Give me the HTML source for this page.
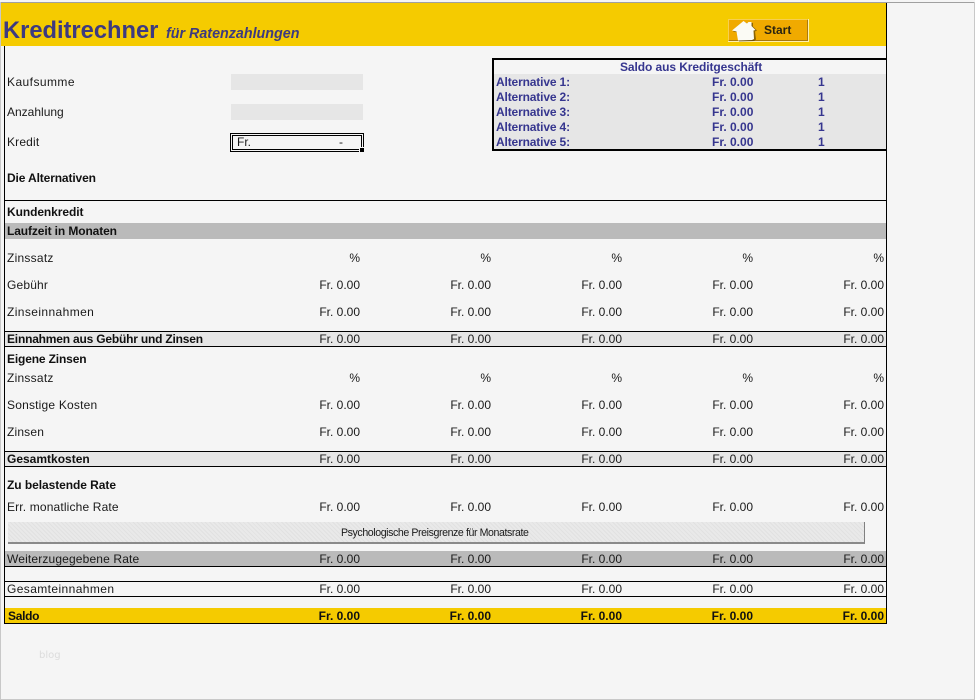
<!DOCTYPE html>
<html lang="de">
<head>
<meta charset="utf-8">
<title>Kreditrechner</title>
<style>
html,body{margin:0;padding:0}
body{width:975px;height:700px;position:relative;overflow:hidden;background:#f5f5f5;font-family:"Liberation Sans",Arial,sans-serif;font-size:12px;color:#1a1a1a}
.b{position:absolute}
.k{position:absolute;background:#000}
.t{position:absolute;line-height:14px;white-space:nowrap}
.l{left:7px}
.r{width:100px;text-align:right}
.bd{font-weight:bold;color:#111}
.c1{left:260px}.c2{left:391px}.c3{left:522px}.c4{left:653px}.c5{left:784px}
.n{position:absolute;line-height:14px;color:#36368f;font-weight:bold;white-space:nowrap}
.a{letter-spacing:-.15px}
</style>
</head>
<body>
<!-- window edges -->
<div class="b" style="left:0;top:2px;width:975px;height:1px;background:#a0a0a0"></div>
<div class="b" style="left:0;top:699px;width:975px;height:1px;background:#c8c8c8"></div>
<div class="b" style="left:974px;top:2px;width:1px;height:698px;background:#c8c8c8"></div>
<div class="b" style="left:0;top:2px;width:1px;height:698px;background:#c8c8c8"></div>

<!-- header -->
<div class="b" style="left:1px;top:3px;width:885px;height:43px;background:#f5cb00"></div>
<div class="t" style="left:3px;top:16px;line-height:30px;font-size:23.7px;font-weight:bold;color:#3d3a80">Kreditrechner</div>
<div class="t" style="left:166px;top:26px;line-height:16px;font-size:14.3px;font-weight:bold;font-style:italic;color:#3d3a80">für Ratenzahlungen</div>

<!-- start button -->
<div class="b" style="left:728px;top:19px;width:81px;height:23px;background:#f0aa00;box-sizing:border-box;border-top:1px solid #f7cf50;border-left:1px solid #f7cf50;border-right:2px solid #a87a10;border-bottom:2px solid #a87a10"></div>
<div class="b" style="left:728px;top:41px;width:81px;height:1px;background:#fff0b0"></div>
<div class="b" style="left:808px;top:19px;width:1px;height:23px;background:#fff0b0"></div>
<svg class="b" style="left:731px;top:19px" width="28" height="23" viewBox="0 0 28 23">
<path d="M1 12 L13 2.5 L16 4.5 L18 3 L21 3.5 L21 7 L25 11 L23 12 L24 20 L22 21.5 L7 22 L6 13 Z" fill="#3a2a05" opacity=".55" transform="translate(1,0.5)"/>
<path d="M1 11.5 L12.5 2 L16 4.5 L17.5 3 L20.5 3 L20.5 7 L24.5 11 L22.5 11.5 L23 20 L21 21 L7 21.5 L5.5 12.5 Z" fill="#fbfbf5"/>
</svg>
<div class="t" style="left:764px;top:23px;font-weight:bold;font-size:12px;color:#2b2410">Start</div>

<!-- frame lines -->
<div class="k" style="left:4px;top:46px;width:1px;height:578px"></div>
<div class="k" style="left:886px;top:3px;width:1px;height:621px"></div>

<!-- inputs -->
<div class="t l" style="top:75px;letter-spacing:.44px">Kaufsumme</div>
<div class="t l" style="top:105px">Anzahlung</div>
<div class="t l" style="top:135px;letter-spacing:.17px">Kredit</div>
<div class="b" style="left:231px;top:74px;width:132px;height:16px;background:#e6e6e6"></div>
<div class="b" style="left:231px;top:104px;width:132px;height:16px;background:#e6e6e6"></div>
<div class="b" style="left:230px;top:133px;width:134px;height:19px;box-sizing:border-box;border:1px solid #000"></div>
<div class="b" style="left:232px;top:135px;width:130px;height:15px;box-sizing:border-box;border:1px solid #000"></div>
<div class="b" style="left:360px;top:148px;width:4px;height:4px;background:#000;outline:1px solid #f5f5f5"></div>
<div class="t" style="left:237px;top:135px">Fr.</div>
<div class="t" style="left:339px;top:135px">-</div>

<!-- saldo box -->
<div class="b" style="left:494px;top:74px;width:392px;height:75px;background:#e6e6e6"></div>
<div class="k" style="left:492px;top:58px;width:394px;height:2px"></div>
<div class="k" style="left:492px;top:149px;width:394px;height:2px"></div>
<div class="k" style="left:492px;top:58px;width:2px;height:93px"></div>
<div class="n" style="left:620px;top:60px;letter-spacing:-.08px">Saldo aus Kreditgeschäft</div>
<div class="n a" style="left:496px;top:75px">Alternative 1:</div><div class="n" style="left:712px;top:75px">Fr. 0.00</div><div class="n" style="left:818px;top:75px">1</div>
<div class="n a" style="left:496px;top:90px">Alternative 2:</div><div class="n" style="left:712px;top:90px">Fr. 0.00</div><div class="n" style="left:818px;top:90px">1</div>
<div class="n a" style="left:496px;top:105px">Alternative 3:</div><div class="n" style="left:712px;top:105px">Fr. 0.00</div><div class="n" style="left:818px;top:105px">1</div>
<div class="n a" style="left:496px;top:120px">Alternative 4:</div><div class="n" style="left:712px;top:120px">Fr. 0.00</div><div class="n" style="left:818px;top:120px">1</div>
<div class="n a" style="left:496px;top:135px">Alternative 5:</div><div class="n" style="left:712px;top:135px">Fr. 0.00</div><div class="n" style="left:818px;top:135px">1</div>

<div class="t l bd" style="top:171px;letter-spacing:-.13px">Die Alternativen</div>
<div class="k" style="left:4px;top:200px;width:882px;height:1px"></div>
<div class="t l bd" style="top:205px;letter-spacing:-.08px">Kundenkredit</div>

<!-- bands -->
<div class="b" style="left:5px;top:223px;width:881px;height:16px;background:#bababa"></div>
<div class="b" style="left:5px;top:332px;width:881px;height:14px;background:#e6e6e6"></div>
<div class="b" style="left:5px;top:452px;width:881px;height:14px;background:#e6e6e6"></div>
<div class="b" style="left:5px;top:551px;width:881px;height:15px;background:#bababa"></div>
<div class="b" style="left:5px;top:608px;width:881px;height:15px;background:#f5cb00"></div>
<div class="k" style="left:4px;top:331px;width:882px;height:1px"></div>
<div class="k" style="left:4px;top:346px;width:882px;height:1px"></div>
<div class="k" style="left:4px;top:451px;width:882px;height:1px"></div>
<div class="k" style="left:4px;top:466px;width:882px;height:1px"></div>
<div class="k" style="left:4px;top:566px;width:882px;height:1px"></div>
<div class="k" style="left:4px;top:581px;width:882px;height:1px"></div>
<div class="k" style="left:4px;top:596px;width:882px;height:1px"></div>
<div class="k" style="left:4px;top:623px;width:883px;height:1px"></div>

<div class="t l bd" style="top:224px;letter-spacing:-.11px">Laufzeit in Monaten</div>

<!-- Zinssatz 1 -->
<div class="t l" style="top:251px;letter-spacing:.25px">Zinssatz</div>
<div class="t r c1" style="top:251px">%</div><div class="t r c2" style="top:251px">%</div><div class="t r c3" style="top:251px">%</div><div class="t r c4" style="top:251px">%</div><div class="t r c5" style="top:251px">%</div>
<!-- Gebühr -->
<div class="t l" style="top:278px;letter-spacing:.17px">Gebühr</div>
<div class="t r c1" style="top:278px">Fr. 0.00</div><div class="t r c2" style="top:278px">Fr. 0.00</div><div class="t r c3" style="top:278px">Fr. 0.00</div><div class="t r c4" style="top:278px">Fr. 0.00</div><div class="t r c5" style="top:278px">Fr. 0.00</div>
<!-- Zinseinnahmen -->
<div class="t l" style="top:305px;letter-spacing:.4px">Zinseinnahmen</div>
<div class="t r c1" style="top:305px">Fr. 0.00</div><div class="t r c2" style="top:305px">Fr. 0.00</div><div class="t r c3" style="top:305px">Fr. 0.00</div><div class="t r c4" style="top:305px">Fr. 0.00</div><div class="t r c5" style="top:305px">Fr. 0.00</div>
<!-- Einnahmen -->
<div class="t l bd" style="top:332px;letter-spacing:-.2px">Einnahmen aus Gebühr und Zinsen</div>
<div class="t r c1" style="top:332px">Fr. 0.00</div><div class="t r c2" style="top:332px">Fr. 0.00</div><div class="t r c3" style="top:332px">Fr. 0.00</div><div class="t r c4" style="top:332px">Fr. 0.00</div><div class="t r c5" style="top:332px">Fr. 0.00</div>

<div class="t l bd" style="top:352px;letter-spacing:-.15px">Eigene Zinsen</div>
<!-- Zinssatz 2 -->
<div class="t l" style="top:371px;letter-spacing:.25px">Zinssatz</div>
<div class="t r c1" style="top:371px">%</div><div class="t r c2" style="top:371px">%</div><div class="t r c3" style="top:371px">%</div><div class="t r c4" style="top:371px">%</div><div class="t r c5" style="top:371px">%</div>
<!-- Sonstige -->
<div class="t l" style="top:398px;letter-spacing:.2px">Sonstige Kosten</div>
<div class="t r c1" style="top:398px">Fr. 0.00</div><div class="t r c2" style="top:398px">Fr. 0.00</div><div class="t r c3" style="top:398px">Fr. 0.00</div><div class="t r c4" style="top:398px">Fr. 0.00</div><div class="t r c5" style="top:398px">Fr. 0.00</div>
<!-- Zinsen -->
<div class="t l" style="top:425px;letter-spacing:.17px">Zinsen</div>
<div class="t r c1" style="top:425px">Fr. 0.00</div><div class="t r c2" style="top:425px">Fr. 0.00</div><div class="t r c3" style="top:425px">Fr. 0.00</div><div class="t r c4" style="top:425px">Fr. 0.00</div><div class="t r c5" style="top:425px">Fr. 0.00</div>
<!-- Gesamtkosten -->
<div class="t l bd" style="top:452px">Gesamtkosten</div>
<div class="t r c1" style="top:452px">Fr. 0.00</div><div class="t r c2" style="top:452px">Fr. 0.00</div><div class="t r c3" style="top:452px">Fr. 0.00</div><div class="t r c4" style="top:452px">Fr. 0.00</div><div class="t r c5" style="top:452px">Fr. 0.00</div>

<div class="t l bd" style="top:478px;letter-spacing:-.06px">Zu belastende Rate</div>
<!-- Err -->
<div class="t l" style="top:500px;letter-spacing:.15px">Err. monatliche Rate</div>
<div class="t r c1" style="top:500px">Fr. 0.00</div><div class="t r c2" style="top:500px">Fr. 0.00</div><div class="t r c3" style="top:500px">Fr. 0.00</div><div class="t r c4" style="top:500px">Fr. 0.00</div><div class="t r c5" style="top:500px">Fr. 0.00</div>

<!-- Button -->
<div class="b" style="left:8px;top:522px;width:857px;height:22px;box-sizing:border-box;background:#e6e6e6;background-image:repeating-linear-gradient(45deg,#e1e1e1 0 1px,#e9e9e9 1px 3px);border-right:1px solid #808080;border-bottom:2px solid #8a8a8a"></div>
<div class="t" style="left:341px;top:526px;font-size:10.6px;letter-spacing:-.41px">Psychologische Preisgrenze für Monatsrate</div>

<!-- Weiterzugegebene -->
<div class="t l" style="top:552px;letter-spacing:.15px">Weiterzugegebene Rate</div>
<div class="t r c1" style="top:552px">Fr. 0.00</div><div class="t r c2" style="top:552px">Fr. 0.00</div><div class="t r c3" style="top:552px">Fr. 0.00</div><div class="t r c4" style="top:552px">Fr. 0.00</div><div class="t r c5" style="top:552px">Fr. 0.00</div>
<!-- Gesamteinnahmen -->
<div class="t l" style="top:582px;letter-spacing:.4px">Gesamteinnahmen</div>
<div class="t r c1" style="top:582px">Fr. 0.00</div><div class="t r c2" style="top:582px">Fr. 0.00</div><div class="t r c3" style="top:582px">Fr. 0.00</div><div class="t r c4" style="top:582px">Fr. 0.00</div><div class="t r c5" style="top:582px">Fr. 0.00</div>
<!-- Saldo -->
<div class="t bd" style="left:8px;top:609px;letter-spacing:-.3px">Saldo</div>
<div class="t r c1 bd" style="top:609px">Fr. 0.00</div><div class="t r c2 bd" style="top:609px">Fr. 0.00</div><div class="t r c3 bd" style="top:609px">Fr. 0.00</div><div class="t r c4 bd" style="top:609px">Fr. 0.00</div><div class="t r c5 bd" style="top:609px">Fr. 0.00</div>

<div class="t" style="left:39px;top:649px;font-size:10px;color:#dcdcdc;font-family:'DejaVu Sans',sans-serif">blog</div>
</body>
</html>
